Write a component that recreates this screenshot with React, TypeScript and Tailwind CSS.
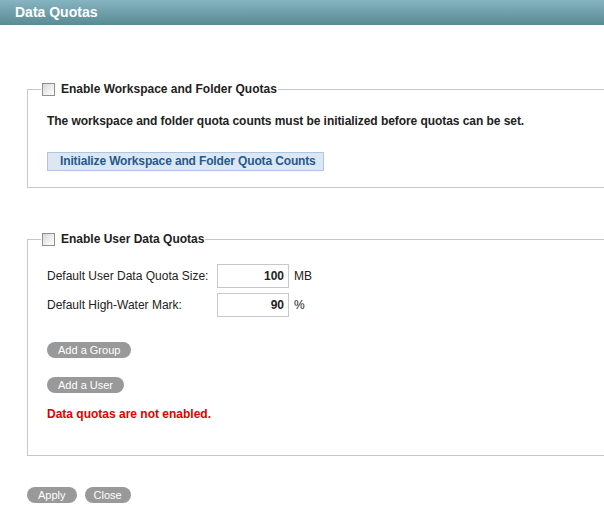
export default function App() {
  const checkbox = (
    <span className="inline-block w-[13px] h-[13px] border border-[#8f8f8f] bg-gradient-to-br from-[#d9d9d9] to-white" />
  );

  const pillBase = "h-[16px] rounded-full bg-[#999] text-white text-[11px] leading-[16px]";
  const pill = `${pillBase} px-[11px]`;

  return (
    <div className="w-[604px] h-[519px] overflow-hidden bg-white font-['Liberation_Sans',Arial,sans-serif] text-[12px] text-[#222]">
      <div className="h-[25px] bg-gradient-to-b from-[#86b5c1] to-[#5a8a93] pl-[15px] text-white font-bold text-[14px] leading-[25px]">
        Data Quotas
      </div>

      <div className="pl-[27px] pt-[57px]">
        <fieldset className="w-[640px] border border-[#c8c8c8]">
          <legend className="ml-[13px] px-[1px] flex items-center gap-[6px] leading-[14px] font-bold text-[#222]">
            {checkbox}
            Enable Workspace and Folder Quotas
          </legend>
          <div className="pl-[19px] pt-[18px] pb-[16px] flex flex-col items-start">
            <p className="font-bold leading-[14px] tracking-[-0.06px]">
              The workspace and folder quota counts must be initialized before quotas can be set.
            </p>
            <button className="mt-[24px] w-[277px] h-[19px] pl-[12px] text-left border border-[#a9c6e3] bg-[#dce7f3] text-[#1f5b8f] font-bold text-[12px] leading-[17px] tracking-[-0.14px] whitespace-nowrap">
              Initialize Workspace and Folder Quota Counts
            </button>
          </div>
        </fieldset>

        <fieldset className="mt-[44px] w-[640px] border border-[#c8c8c8]">
          <legend className="ml-[13px] px-[1px] flex items-center gap-[6px] leading-[14px] font-bold text-[#222]">
            {checkbox}
            Enable User Data Quotas
          </legend>
          <div className="pl-[19px] pt-[18px] pb-[34px] flex flex-col items-start">
            <div className="flex flex-col gap-[5px]">
              <div className="flex items-center">
                <span className="w-[170px]">Default User Data Quota Size:</span>
                <input
                  readOnly
                  value="100"
                  className="w-[72px] h-[24px] border border-[#c8c8c8] text-right pr-[4px] font-bold text-[12px] outline-none"
                />
                <span className="ml-[5px]">MB</span>
              </div>
              <div className="flex items-center">
                <span className="w-[170px]">Default High-Water Mark:</span>
                <input
                  readOnly
                  value="90"
                  className="w-[72px] h-[24px] border border-[#c8c8c8] text-right pr-[4px] font-bold text-[12px] outline-none"
                />
                <span className="ml-[5px]">%</span>
              </div>
            </div>
            <button className={`mt-[25px] ${pill}`}>Add a Group</button>
            <button className={`mt-[19px] ${pill}`}>Add a User</button>
            <p className="mt-[14px] font-bold text-[#e00000] leading-[14px]">Data quotas are not enabled.</p>
          </div>
        </fieldset>
      </div>

      <div className="pl-[27px] mt-[31px] flex gap-[8px]">
        <button className={pill}>Apply</button>
        <button className={`${pillBase} px-[9px]`}>Close</button>
      </div>
    </div>
  );
}
